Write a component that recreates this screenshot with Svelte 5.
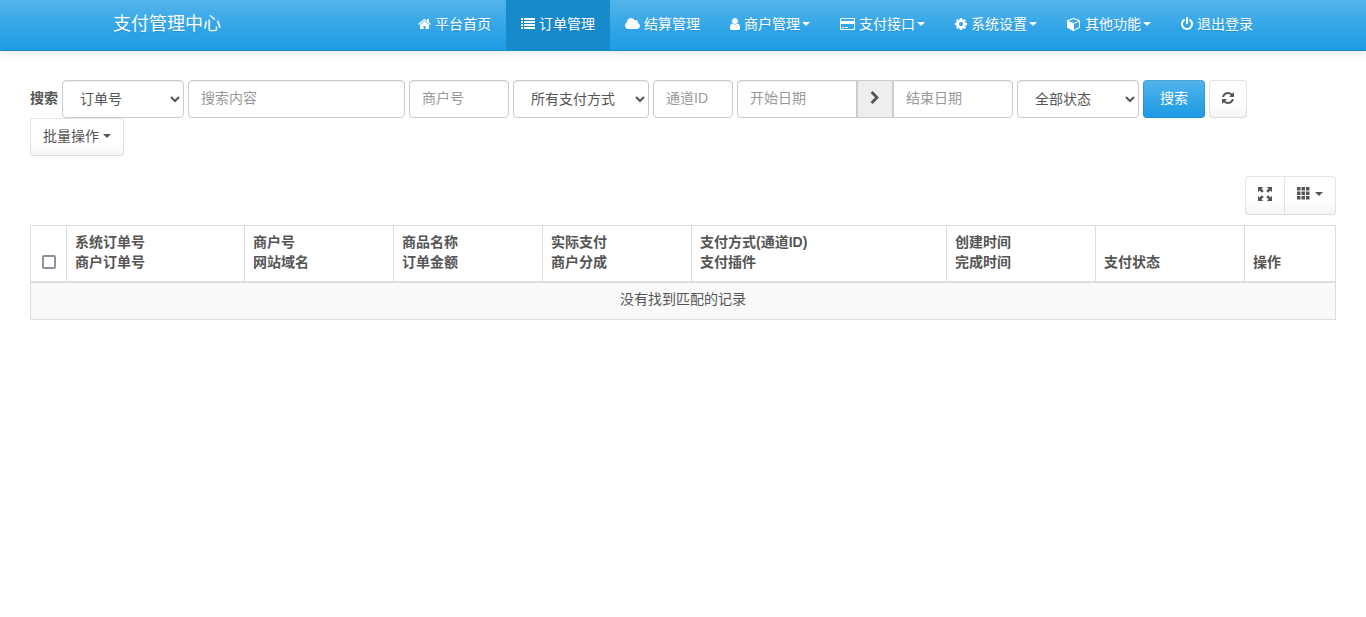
<script>
  const nav = [
    { title: '平台首页', icon: 'home' },
    { title: '订单管理', icon: 'list', active: true },
    { title: '结算管理', icon: 'cloud' },
    { title: '商户管理', icon: 'user', menu: true },
    { title: '支付接口', icon: 'card', menu: true },
    { title: '系统设置', icon: 'cog', menu: true },
    { title: '其他功能', icon: 'cube', menu: true },
    { title: '退出登录', icon: 'power' }
  ];

  // box: left edge and width of the glyph, on a 1792 unit em
  const icons = {
    home: { box: [64, 1664], path: 'M1472 992v480q0 26-19 45t-45 19h-384v-384h-256v384h-384q-26 0-45-19t-19-45v-480q0-1 .5-3t.5-3l575-474 575 474q1 2 1 6zm223-69l-62 74q-8 9-21 11h-3q-13 0-21-7l-692-577-692 577q-12 8-24 7-13-2-21-11l-62-74q-8-10-7-23.5t11-21.5l719-599q32-26 76-26t76 26l244 204v-195q0-14 9-23t23-9h192q14 0 23 9t9 23v408l219 182q10 8 11 21.5t-7 23.5z' },
    list: { box: [0, 1792], path: 'M0 128h256v256H0zM384 128h1408v256H384zM0 512h256v256H0zM384 512h1408v256H384zM0 896h256v256H0zM384 896h1408v256H384zM0 1280h256v256H0zM384 1280h1408v256H384z' },
    cloud: { box: [64, 1920], path: 'M1984 1152q0 159-112.5 271.5t-271.5 112.5h-1088q-185 0-316.5-131.5t-131.5-316.5q0-132 71-241.5t187-163.5q-2-28-2-43 0-212 150-362t362-150q158 0 286.5 88t187.5 230q70-62 166-62 106 0 181 75t75 181q0 75-41 138 129 30 213 134.5t84 239.5z' },
    user: { box: [256, 1280], path: 'M1536 1399q0 109-62.5 187t-150.5 78h-854q-88 0-150.5-78t-62.5-187q0-85 8.5-160.5t31.5-152 58.5-131 94-89 134.5-34.5q131 128 313 128t313-128q76 0 134.5 34.5t94 89 58.5 131 31.5 152 8.5 160.5zm-256-887q0 159-112.5 271.5t-271.5 112.5-271.5-112.5-112.5-271.5 112.5-271.5 271.5-112.5 271.5 112.5 112.5 271.5z' },
    card: { box: [0, 1920], path: 'M1760 128q66 0 113 47t47 113v1216q0 66-47 113t-113 47h-1600q-66 0-113-47t-47-113v-1216q0-66 47-113t113-47h1600zm-1600 128q-13 0-22.5 9.5t-9.5 22.5v224h1664v-224q0-13-9.5-22.5t-22.5-9.5h-1600zm1600 1280q13 0 22.5-9.5t9.5-22.5v-608h-1664v608q0 13 9.5 22.5t22.5 9.5h1600zm-1504-128v-128h256v128h-256zm384 0v-128h384v128h-384z' },
    cog: { box: [128, 1536], path: 'M1152 896q0-106-75-181t-181-75-181 75-75 181 75 181 181 75 181-75 75-181zm512-109v222q0 12-8 23t-20 13l-185 28q-19 54-39 91 35 50 107 138 10 12 10 25t-9 23q-27 37-99 108t-94 71q-12 0-26-9l-138-108q-44 23-91 38-16 136-29 186-7 28-36 28h-222q-14 0-24.5-8.5t-11.5-21.5l-28-184q-49-16-90-37l-141 107q-10 9-25 9-14 0-25-11-126-114-165-168-7-10-7-23 0-12 8-23 15-21 51-66.5t54-70.5q-27-50-41-99l-183-27q-13-2-21-12.5t-8-23.5v-222q0-12 8-23t19-13l186-28q14-46 39-92-40-57-107-138-10-12-10-24 0-10 9-23 26-36 98.5-107.5t94.5-71.5q13 0 26 10l138 107q44-23 91-38 16-136 29-186 7-28 36-28h222q14 0 24.5 8.5t11.5 21.5l28 184q49 16 90 37l142-107q9-9 24-9 13 0 25 10 129 119 165 170 7 8 7 22 0 12-8 23-15 21-51 66.5t-54 70.5q26 50 41 98l183 28q13 2 21 12.5t8 23.5z' },
    cube: { box: [0, 1792], path: 'M896 1629l640-349v-636l-640 233v752zm-64-865l698-254-698-254-698 254zm832-252v768q0 35-18 65t-49 47l-704 384q-28 16-61 16t-61-16l-704-384q-31-17-49-47t-18-65v-768q0-40 23-73t61-47l704-256q22-8 44-8t44 8l704 256q38 14 61 47t23 73z' },
    power: { box: [128, 1536], path: 'M1664 896q0 156-61 298t-164 245-245 164-298 61-298-61-245-164-164-245-61-298q0-182 80.5-343t226.5-270q43-32 95.5-25t83.5 50q32 42 24.5 94.5t-49.5 84.5q-98 74-151.5 181t-53.5 228q0 104 40.5 198.5t109.5 163.5 163.5 109.5 198.5 40.5 198.5-40.5 163.5-109.5 109.5-163.5 40.5-198.5q0-121-53.5-228t-151.5-181q-42-32-49.5-84.5t24.5-94.5q31-43 84-50t95 25q146 109 226.5 270t80.5 343zm-640-768v640q0 52-38 90t-90 38-90-38-38-90v-640q0-52 38-90t90-38 90 38 38 90z' },
    refresh: { box: [128, 1536], path: 'M1639 1056q0 5-1 7-64 268-268 434.5t-478 166.5q-146 0-282.5-55t-243.5-157l-129 129q-19 19-45 19t-45-19-19-45v-448q0-26 19-45t45-19h448q26 0 45 19t19 45-19 45l-137 137q71 66 161 102t187 36q134 0 250-65t186-179q11-17 53-117 8-23 30-23h192q13 0 22.5 9.5t9.5 22.5zm25-800v448q0 26-19 45t-45 19h-448q-26 0-45-19t-19-45 19-45l138-138q-148-137-349-137-134 0-250 65t-186 179q-11 17-53 117-8 23-30 23h-199q-13 0-22.5-9.5t-9.5-22.5v-7q65-268 270-434.5t480-166.5q146 0 284 55.5t245 156.5l130-129q19-19 45-19t45 19 19 45z' },
    chevron: { box: [256, 1280], path: 'M1363 877l-742 742q-19 19-45 19t-45-19l-166-166q-19-19-19-45t19-45l531-531-531-531q-19-19-19-45t19-45l166-166q19-19 45-19t45 19l742 742q19 19 19 45t-19 45z' },
    fullscreen: { box: [0, 1792], path: 'M0 0h660L450 210l290 290-240 240-290-290L0 660zM1792 0v660l-210-210-290 290-240-240 290-290L1132 0zM0 1792v-660l210 210 290-290 240 240-290 290 210 210zM1792 1792h-660l210-210-290-290 240-240 290 290 210-210z' },
    grid: { box: [0, 1792], path: 'M0 0h448v448H0zM576 0h448v448H576zM1152 0h448v448h-448zM0 576h448v448H0zM576 576h448v448H576zM1152 576h448v448h-448zM0 1152h448v448H0zM576 1152h448v448H576zM1152 1152h448v448h-448z' }
  };

  const columns = [
    { lines: ['系统订单号', '商户订单号'], width: 178 },
    { lines: ['商户号', '网站域名'], width: 149 },
    { lines: ['商品名称', '订单金额'], width: 149 },
    { lines: ['实际支付', '商户分成'], width: 149 },
    { lines: ['支付方式(通道ID)', '支付插件'], width: 255 },
    { lines: ['创建时间', '完成时间'], width: 149 },
    { lines: ['支付状态'], width: 149 },
    { lines: ['操作'], width: 91 }
  ];
</script>

{#snippet icon(name)}
  <svg
    class="icon"
    width={icons[name].box[1] / 128}
    height="14"
    viewBox="{icons[name].box[0]} 0 {icons[name].box[1]} 1792"
    aria-hidden="true"
  >
    <path d={icons[name].path} />
  </svg>
{/snippet}

<header class="navbar">
  <div class="container">
    <a class="brand" href="#home">支付管理中心</a>
    <nav>
      {#each nav as item}
        <a href="#{item.icon}" class:active={item.active}>
          {@render icon(item.icon)}
          <span>{item.title}</span>
          {#if item.menu}<i class="caret"></i>{/if}
        </a>
      {/each}
    </nav>
  </div>
</header>

<main>
  <form class="search" onsubmit={(e) => e.preventDefault()}>
    <label for="column">搜索</label>
    <select id="column" class="control medium">
      <option>订单号</option>
      <option>商户订单号</option>
    </select>
    <input class="control wide" type="text" placeholder="搜索内容" aria-label="搜索内容" />
    <input class="control small" type="text" placeholder="商户号" aria-label="商户号" />
    <select class="control large" aria-label="支付方式">
      <option>所有支付方式</option>
    </select>
    <input class="control tiny" type="text" placeholder="通道ID" aria-label="通道ID" />
    <div class="range">
      <input class="control" type="text" placeholder="开始日期" aria-label="开始日期" />
      <span class="addon">{@render icon('chevron')}</span>
      <input class="control" type="text" placeholder="结束日期" aria-label="结束日期" />
    </div>
    <select class="control medium" aria-label="状态">
      <option>全部状态</option>
    </select>
    <button class="btn primary" type="submit">搜索</button>
    <button class="btn" type="button" aria-label="刷新">{@render icon('refresh')}</button>
    <button class="btn" type="button">批量操作 <i class="caret"></i></button>
  </form>

  <div class="toolbar">
    <button class="btn" type="button" aria-label="全屏">{@render icon('fullscreen')}</button>
    <button class="btn" type="button" aria-label="列">{@render icon('grid')} <i class="caret"></i></button>
  </div>

  <table>
    <colgroup>
      <col class="check" />
      {#each columns as column}
        <col style:width="{column.width}px" />
      {/each}
    </colgroup>
    <thead>
      <tr>
        <th class="check"><input type="checkbox" aria-label="全选" /></th>
        {#each columns as column}
          <th>
            {#each column.lines as line}
              <div>{line}</div>
            {/each}
          </th>
        {/each}
      </tr>
    </thead>
    <tbody>
      <tr>
        <td colspan={columns.length + 1}>没有找到匹配的记录</td>
      </tr>
    </tbody>
  </table>
</main>

<style>
  :global(body) {
    margin: 0;
    background: #fff;
    color: #555;
    font: 14px/20px "Liberation Sans", "Noto Sans CJK SC", sans-serif;
  }

  .navbar {
    box-sizing: border-box;
    min-height: 51px;
    border-bottom: 1px solid #178acc;
    background: linear-gradient(#54b4eb, #2fa4e7 60%, #1d9ce5);
    box-shadow: 0 1px 10px rgba(0, 0, 0, 0.1);
    text-shadow: 0 1px 0 rgba(0, 0, 0, 0.1);
  }

  .container {
    box-sizing: border-box;
    max-width: 1170px;
    margin: 0 auto;
    display: flex;
    justify-content: space-between;
  }

  .navbar a {
    color: #fff;
    text-decoration: none;
    padding: 14px 15px 16px;
    height: 20px;
  }

  .brand {
    font-size: 18px;
  }

  nav {
    display: flex;
  }

  nav a {
    display: flex;
    align-items: center;
    white-space: nowrap;
  }

  nav .icon {
    margin-right: 4px;
  }

  nav a.active {
    background: #178acc;
  }

  .icon {
    display: block;
    flex: none;
    fill: currentColor;
  }

  .caret {
    margin-left: 2px;
    border-top: 4px solid;
    border-left: 4px solid transparent;
    border-right: 4px solid transparent;
  }

  main {
    padding: 29px 30px;
  }

  .search {
    display: flex;
    flex-wrap: wrap;
    align-items: center;
    column-gap: 4px;
  }

  label {
    padding-bottom: 2px;
    font-weight: bold;
  }

  .control {
    box-sizing: border-box;
    height: 38px;
    padding: 7px 12px 9px;
    border: 1px solid #ccc;
    border-radius: 4px;
    background: #fff;
    box-shadow: inset 0 1px 1px rgba(0, 0, 0, 0.075);
    color: #555;
    font: inherit;
  }

  select.control {
    padding: 8px 12px 8px 13px;
  }

  .control::placeholder {
    color: #999;
  }

  .tiny {
    width: 80px;
  }

  .small {
    width: 100px;
  }

  .medium {
    width: 122px;
  }

  .large {
    width: 136px;
  }

  .wide {
    width: 217px;
  }

  .range {
    display: flex;
  }

  .range .control {
    width: 120px;
  }

  .range .control:first-child {
    border-radius: 4px 0 0 4px;
  }

  .range .control:last-child {
    border-radius: 0 4px 4px 0;
  }

  .addon {
    box-sizing: border-box;
    width: 36px;
    padding-bottom: 2px;
    display: grid;
    place-items: center;
    border: 1px solid #ccc;
    background: #eee;
  }

  .btn {
    box-sizing: border-box;
    height: 38px;
    padding: 7px 12px 9px;
    display: flex;
    align-items: center;
    border: 1px solid rgba(0, 0, 0, 0.1);
    border-radius: 4px;
    background: linear-gradient(#fff, #fff 60%, #f5f5f5) border-box;
    color: #555;
    font: inherit;
  }

  .btn .caret {
    margin-left: 4px;
  }

  .btn.primary {
    padding: 7px 16px 9px;
    background: linear-gradient(#54b4eb, #2fa4e7 60%, #1d9ce5) border-box;
    color: #fff;
  }

  .toolbar {
    display: flex;
    justify-content: flex-end;
    margin: 20px 0 10px;
  }

  .toolbar .btn {
    height: 39px;
    padding-bottom: 11px;
  }

  .toolbar .btn:first-child {
    border-right: 0;
    border-radius: 4px 0 0 4px;
  }

  .toolbar .btn:last-child {
    border-radius: 0 4px 4px 0;
  }

  table {
    width: 100%;
    table-layout: fixed;
    border-collapse: collapse;
    border: 1px solid #ddd;
  }

  col.check {
    width: 36px;
  }

  th {
    padding: 6px 8px 9px;
    border: 1px solid #ddd;
    border-bottom-width: 2px;
    text-align: left;
    vertical-align: bottom;
  }

  th input {
    appearance: none;
    box-sizing: border-box;
    width: 14px;
    height: 14px;
    margin: 3px auto;
    display: block;
    border: 2px solid #8f8f9d;
    border-radius: 2px;
  }

  th input:checked {
    background: #2fa4e7;
  }

  td {
    padding: 6px 8px 10px;
    background: #f9f9f9;
    text-align: center;
  }
</style>
